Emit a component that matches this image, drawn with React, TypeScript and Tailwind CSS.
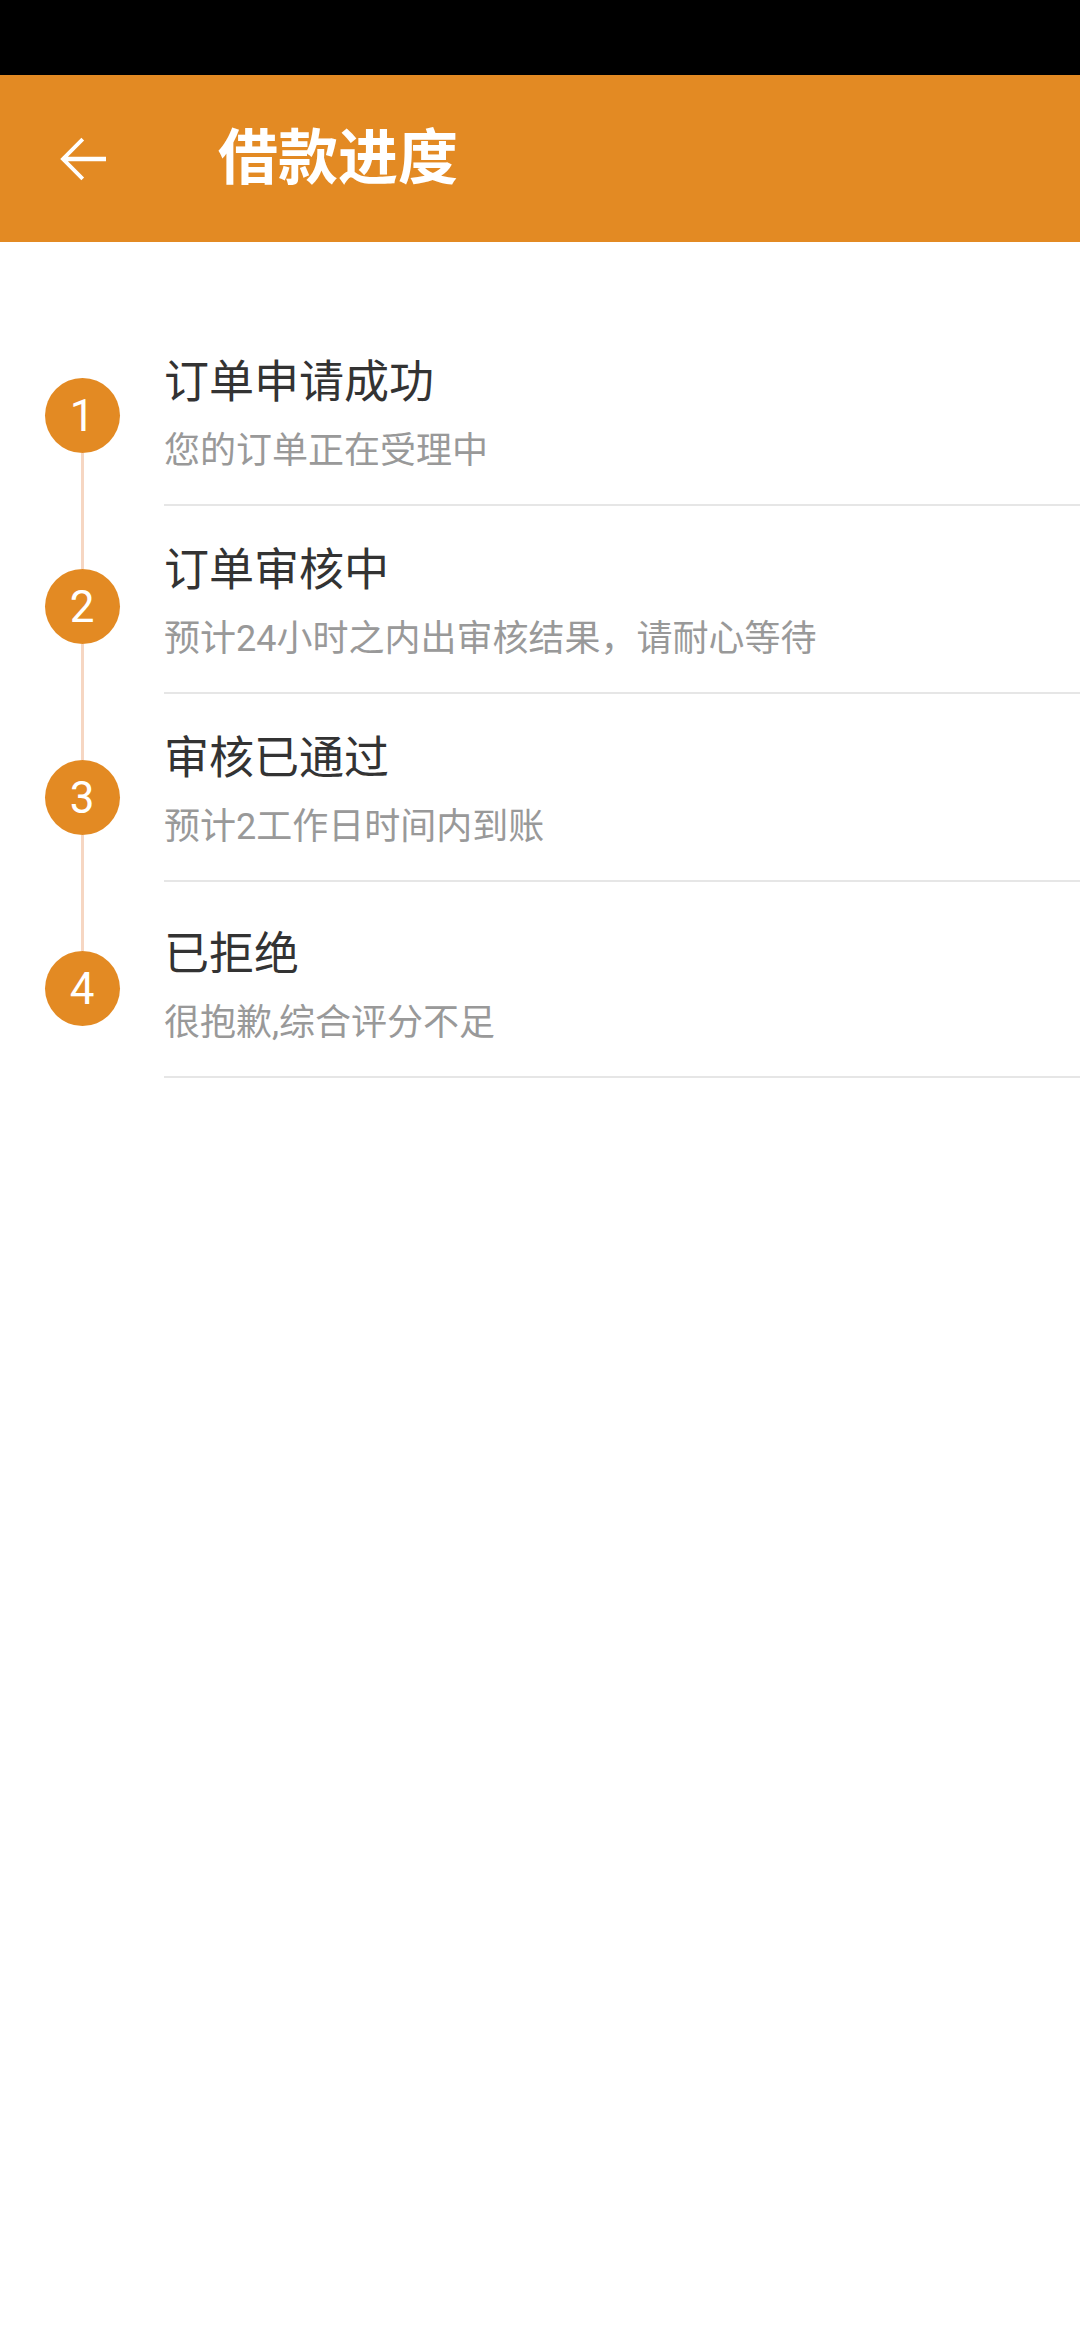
const steps = [
  { n: 1, title: '订单申请成功', desc: '您的订单正在受理中' },
  { n: 2, title: '订单审核中', desc: '预计24小时之内出审核结果，请耐心等待' },
  { n: 3, title: '审核已通过', desc: '预计2工作日时间内到账' },
  { n: 4, title: '已拒绝', desc: '很抱歉,综合评分不足' },
];

const font = "font-['Roboto','Noto_Sans_CJK_SC',sans-serif]";

function BackArrow() {
  return (
    <svg width="72" height="72" viewBox="0 0 24 24" fill="#fff">
      <path d="M20 11.25H7.3l5.4-5.4L11.8 4.95 4.75 12l7.05 7.05.9-.9-5.4-5.4H20v-1.5z" />
    </svg>
  );
}

export default function App() {
  return (
    <div className={`min-h-[2340px] w-[1080px] bg-white ${font}`}>
      <div className="h-[75px] bg-black" />
      <div className="flex h-[167px] items-center bg-[#e38a23]">
        <div className="flex w-[168px] justify-center pr-[4px]">
          <BackArrow />
        </div>
        <div className="-ml-[118px] pl-[168px] text-[60px] font-bold leading-none text-white">借款进度</div>
      </div>

      <div className="flex">
        {/* timeline */}
        <div className="flex w-[164px] flex-col items-center pt-[136px]">
          {steps.map((s, i) => (
            <div key={s.n} className="flex flex-col items-center">
              <div className="flex h-[75px] w-[75px] items-center justify-center rounded-full bg-[#e38a23] text-[44px] leading-none text-white">
                {s.n}
              </div>
              {i < steps.length - 1 && <div className="h-[116px] w-[3px] bg-[#f6d6c2]" />}
            </div>
          ))}
        </div>

        {/* rows */}
        <div className="flex-1 pt-[76px]">
          {steps.map((s, i) => (
            <div
              key={s.n}
              className={`border-b-2 border-[#e6e6e6] pb-[29px] ${i === steps.length - 1 ? 'pt-[45px]' : 'pt-[37px]'}`}
            >
              <div className="h-[56px] text-[45px] leading-[56px] text-[#333333]">{s.title}</div>
              <div className="mt-[16px] h-[48px] text-[36px] leading-[48px] text-[#999999]">{s.desc}</div>
            </div>
          ))}
        </div>
      </div>
    </div>
  );
}
